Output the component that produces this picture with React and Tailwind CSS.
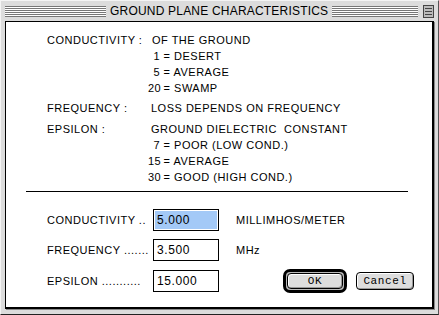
import React from "react";

const Stripes = ({ className }) => (
    // Title bar stripes, classic Mac style.
    <div
        className={`h-[11px] bg-[image:repeating-linear-gradient(to_bottom,#777777_0px,#777777_1px,#ffffff_1px,#ffffff_2px)] ${className}`}
    />
);

const CollapseBox = () => (
    <div className="ml-[5px] flex h-[13px] w-[11px] flex-col justify-center gap-[2px] border border-[#444] bg-[#bbbbbb] px-[1px]">
        <div className="h-[1px] bg-[#444]" />
        <div className="h-[1px] bg-[#444]" />
        <div className="h-[1px] bg-[#444]" />
    </div>
);

const ValueRow = ({ num, text }) => (
    <div className="flex">
        <span className="w-[12px] text-right">{num}</span>
        <span className="whitespace-pre"> = {text}</span>
    </div>
);

const Field = ({ label, value, selected }) => (
    <div className="flex items-center">
        <span className="w-[106px] whitespace-pre">{label}</span>
        <div className="h-[22px] w-[66px] border border-black p-[1px]">
            <div
                className={`flex h-full items-center pl-[2px] text-[12px] tracking-[0.6px] ${
                    selected ? "bg-[#a3c9f7]" : ""
                }`}
            >
                {value}
            </div>
        </div>
    </div>
);

const btn =
    "flex items-center justify-center rounded-[4px] border border-black bg-[#dddddd] font-['Liberation_Mono',monospace] text-[11px] tracking-[0.6px] shadow-[inset_1px_1px_0_#fff,inset_-1px_-1px_0_#999]";

export default function App() {
    return (
        <div className="flex h-[315px] w-[439px] flex-col border-l border-t border-r border-b border-l-[#f4f4f4] border-t-[#f4f4f4] border-r-[#555] border-b-[#222] bg-[#dcdcdc] font-['Liberation_Sans',sans-serif] text-[11px] leading-[16px] tracking-[0.5px] text-black">
            {/* Title bar */}
            <div className="flex h-[20px] shrink-0 items-center pl-[4px] pr-[4px]">
                <Stripes className="w-[101px]" />
                <span className="mx-[4px] text-[12px] leading-[20px] tracking-[0.2px] whitespace-pre">
                    GROUND PLANE CHARACTERISTICS
                </span>
                <Stripes className="flex-1" />
                <CollapseBox />
            </div>

            <div className="mx-[4px] mb-[5px] flex flex-1 flex-col border border-black border-r-2 border-b-2 bg-white shadow-[1px_1px_0_#888]">
                {/* Description block */}
                <div className="grid grid-cols-[104px_1fr] pl-[41px] pt-[10px]">
                    <span className="whitespace-pre">CONDUCTIVITY :</span>
                    <div>
                        <div className="pl-[1px]">OF THE GROUND</div>
                        <div className="-ml-[3px]">
                            <ValueRow num="1" text="DESERT" />
                            <ValueRow num="5" text="AVERAGE" />
                            <ValueRow num="20" text="SWAMP" />
                        </div>
                    </div>

                    <span className="mt-[4px] whitespace-pre">FREQUENCY :</span>
                    <div className="mt-[4px]">LOSS DEPENDS ON FREQUENCY</div>

                    <span className="mt-[5px] whitespace-pre">EPSILON :</span>
                    <div className="mt-[5px]">
                        <div className="whitespace-pre">GROUND DIELECTRIC  CONSTANT</div>
                        <div className="-ml-[3px]">
                            <ValueRow num="7" text="POOR (LOW COND.)" />
                            <ValueRow num="15" text="AVERAGE" />
                            <ValueRow num="30" text="GOOD (HIGH COND.)" />
                        </div>
                    </div>
                </div>

                <div className="ml-[20px] mt-[6px] h-[1px] w-[382px] bg-black" />

                {/* Input fields */}
                <div className="flex flex-col gap-[8px] pl-[41px] pt-[17px]">
                    <div className="flex items-center">
                        <Field label="CONDUCTIVITY .." value="5.000" selected />
                        <span className="ml-[17px]">MILLIMHOS/METER</span>
                    </div>
                    <div className="flex items-center">
                        <Field label="FREQUENCY ......." value="3.500" />
                        <span className="ml-[17px]">MHz</span>
                    </div>
                    <div className="flex items-center">
                        <Field label="EPSILON ..........." value="15.000" />
                        <div className="ml-[64px] flex h-[24px] w-[64px] items-center justify-center rounded-[7px] border-[3px] border-black bg-[#bbbbbb] p-[1px]">
                            <button className={`h-full w-full ${btn}`}>OK</button>
                        </div>
                        <button className={`ml-[9px] h-[18px] w-[58px] ${btn}`}>Cancel</button>
                    </div>
                </div>
            </div>
        </div>
    );
}
